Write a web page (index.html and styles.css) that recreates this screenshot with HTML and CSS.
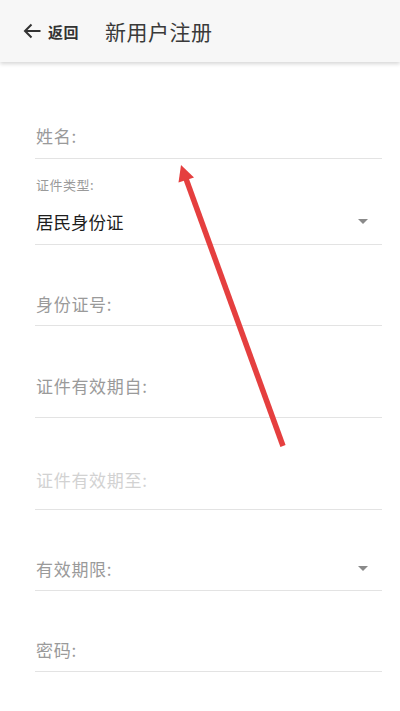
FILE: index.html
```html
<!DOCTYPE html>
<html lang="zh-CN">
<head>
<meta charset="utf-8">
<title>新用户注册</title>
<link rel="stylesheet" href="styles.css">
</head>
<body>
<div class="page">
  <header class="topbar">
    <div class="back">
      <svg class="back-icon" width="18" height="16" viewBox="0 0 18 16"><path d="M17.5 8H2M8.5 1.5L2 8l6.5 6.5" fill="none" stroke="#333" stroke-width="2"/></svg>
      <span class="back-text">返回</span>
    </div>
    <h1 class="title">新用户注册</h1>
  </header>

  <main class="form">
    <div class="field field-first"><span class="label">姓名:</span></div>
    <div class="field field-select">
      <div class="small-label">证件类型:</div>
      <div class="select-row"><span class="value">居民身份证</span><span class="caret"></span></div>
    </div>
    <div class="field"><span class="label">身份证号:</span></div>
    <div class="field field-tall"><span class="label">证件有效期自:</span></div>
    <div class="field field-tall2"><span class="label disabled">证件有效期至:</span></div>
    <div class="field select-row"><span class="label">有效期限:</span><span class="caret"></span></div>
    <div class="field"><span class="label">密码:</span></div>
  </main>

  <svg class="annotation" width="400" height="711" viewBox="0 0 400 711">
    <line x1="283" y1="446" x2="185" y2="176" stroke="#e53f3f" stroke-width="5.5"/>
    <polygon points="181,165 194,177.5 178.5,182.5" fill="#e53f3f"/>
  </svg>
</div>
</body>
</html>
```

FILE: styles.css
```css
html, body {
  margin: 0;
  padding: 0;
  background: #ffffff;
}

body {
  font-family: "Noto Sans CJK SC", Roboto, "Noto Sans", sans-serif;
  color: #222;
}

.page {
  position: relative;
  width: 400px;
  height: 711px;
  overflow: hidden;
}

.topbar {
  display: flex;
  align-items: center;
  height: 62px;
  padding-left: 23px;
  background: #f7f7f7;
  box-shadow: 0 2px 4px rgba(0, 0, 0, 0.16);
  position: relative;
  z-index: 1;
}

.back {
  display: flex;
  align-items: center;
  margin-right: 26px;
}

.back-icon {
  display: block;
  margin-right: 7px;
}

.back-text {
  font-size: 15px;
  font-weight: bold;
  color: #333;
  letter-spacing: 0.5px;
}

.title {
  margin: 0;
  font-size: 21px;
  font-weight: normal;
  color: #3a3a3a;
  letter-spacing: 0.5px;
}

.form {
  padding: 0 18px 0 35px;
}

.field {
  padding: 47px 1px 9px;
  border-bottom: 1px solid #e3e3e3;
  line-height: 24px;
  font-size: 17px;
}

.field-first {
  padding-top: 62px;
  padding-bottom: 10px;
}

.field-tall {
  padding-top: 48px;
  padding-bottom: 19px;
}

.field-tall2 {
  padding-top: 50px;
  padding-bottom: 17px;
}

.field-select {
  padding-top: 17px;
  padding-bottom: 10px;
}

.label {
  color: #9a9a9a;
  letter-spacing: 0.7px;
}

.label.disabled {
  color: #d2d2d2;
}

.small-label {
  font-size: 13px;
  line-height: 18px;
  color: #9a9a9a;
  margin-bottom: 16px;
  letter-spacing: 0.5px;
}

.select-row {
  display: flex;
  align-items: center;
  justify-content: space-between;
}

.value {
  color: #1e1e1e;
  font-size: 17.5px;
}

.caret {
  width: 0;
  height: 0;
  border-left: 5.5px solid transparent;
  border-right: 5.5px solid transparent;
  border-top: 5.5px solid #8a8a8a;
  margin-right: 13px;
  margin-top: -2px;
}

.annotation {
  position: absolute;
  left: 0;
  top: 0;
  z-index: 2;
  pointer-events: none;
}
```
